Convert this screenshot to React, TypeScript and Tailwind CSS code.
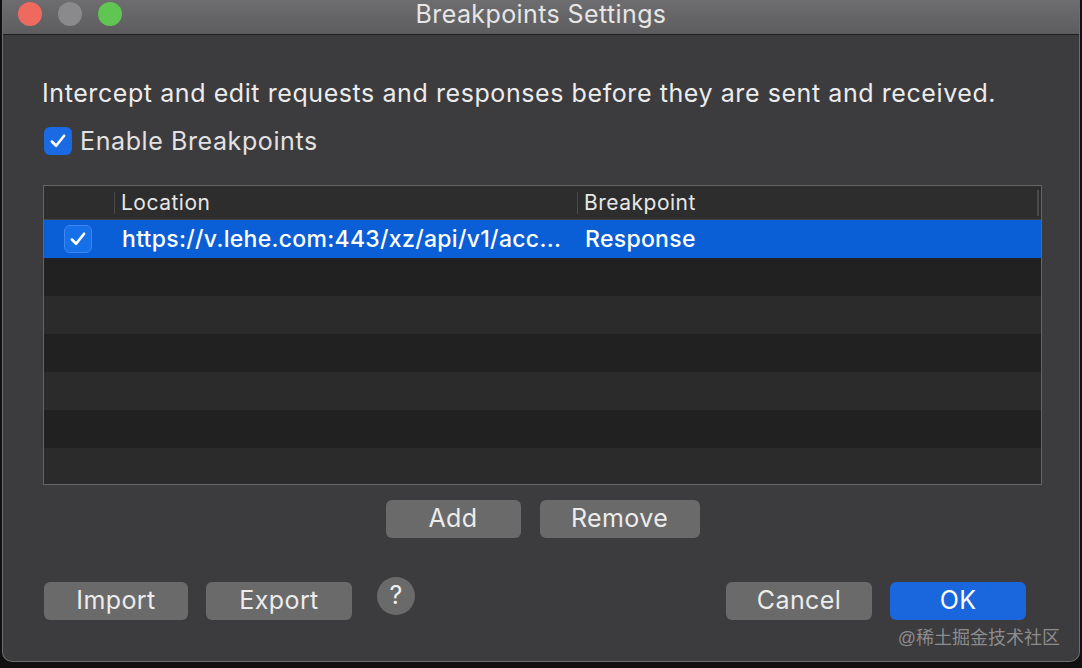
import React from "react";

const font = { fontFamily: "Inter, 'Liberation Sans', sans-serif" };

const Check = ({ size = 20 }: { size?: number }) => (
    <svg width={size} height={size} viewBox="0 0 18 18" fill="none">
        <path d="M3.5 9.5 L7.3 13.3 L14.5 4.3" stroke="white" strokeWidth="2.4" strokeLinecap="round" strokeLinejoin="round" />
    </svg>
);

const Button = ({ label, width, primary = false }: { label: string; width: string; primary?: boolean }) => (
    <div
        className={`${width} h-[38px] rounded-[6px] flex items-center justify-center text-[25px] tracking-[0.4px] text-[#ececec] ${
            primary ? "bg-[#1a66dc] text-white" : "bg-[#6a6a6b]"
        }`}
    >
        {label}
    </div>
);

export default function App() {
    const rows = [0, 1, 2, 3, 4, 5];

    return (
        <div className="min-h-screen w-full bg-[#101010]" style={font}>
            <div className="ml-[2px] w-[1078px] h-[662px] bg-[#3c3b3d] rounded-b-[10px] border-x border-b border-[#6d6d6d] flex flex-col overflow-hidden">
                {/* title bar */}
                <div className="relative h-[35px] shrink-0 bg-gradient-to-b from-[#6e6d6f] to-[#5d5c5e] border-b border-[#1e1e1e] flex items-center">
                    <div className="flex items-center gap-[16px] pl-[15px] -mt-[6px]">
                        <div className="w-[24px] h-[24px] rounded-full bg-[#ee6a5f]" />
                        <div className="w-[24px] h-[24px] rounded-full bg-[#8a898b]" />
                        <div className="w-[24px] h-[24px] rounded-full bg-[#61c554]" />
                    </div>
                    <div className="absolute inset-x-0 top-0 h-[30px] flex items-center justify-center text-[25px] tracking-[0.4px] text-[#e6e6e6]">
                        Breakpoints Settings
                    </div>
                </div>

                {/* body */}
                <div className="flex flex-col pl-[39px] pr-[36px] pt-[43px]">
                    <p className="text-[25px] leading-[30px] text-[#ececec] tracking-[0.58px]">
                        Intercept and edit requests and responses before they are sent and received.
                    </p>

                    <div className="flex items-center gap-[8px] mt-[19px] ml-[2px] h-[28px]">
                        <div className="w-[28px] h-[28px] rounded-[6px] bg-[#1a6ae4] flex items-center justify-center">
                            <Check />
                        </div>
                        <span className="text-[25px] leading-[28px] text-[#e2e2e2] tracking-[0.6px]">Enable Breakpoints</span>
                    </div>

                    {/* table */}
                    <div className="mt-[30px] ml-[1px] w-[999px] h-[300px] border border-[#656565] bg-[#2b2b2b] flex flex-col overflow-hidden">
                        <div className="h-[34px] shrink-0 bg-[#2d2d2d] border-b border-[#444] flex items-center text-[21px] text-[#e6e6e6] tracking-[0.5px]">
                            <div className="w-[71px] h-[22px] border-r border-[#4a4a4a]" />
                            <div className="w-[463px] h-[22px] flex items-center pl-[6px] border-r border-[#4a4a4a]">Location</div>
                            <div className="flex-1 pl-[6px]">Breakpoint</div>
                            <div className="w-[2px] h-[26px] bg-[#4a4a4a] mr-[2px]" />
                        </div>
                        <div className="h-[38px] shrink-0 bg-[#0a5ed6] flex items-center text-[23px] text-white font-medium tracking-[0.3px]">
                            <div className="w-[72px] flex justify-start pl-[20px]">
                                <div className="w-[28px] h-[28px] rounded-[6px] bg-[#1670e8] border border-[#3d86ee] flex items-center justify-center">
                                    <Check />
                                </div>
                            </div>
                            <div className="w-[462px] pl-[6px] whitespace-nowrap overflow-hidden">
                                https://v.lehe.com:443/xz/api/v1/acc...
                            </div>
                            <div className="pl-[7px]">Response</div>
                        </div>
                        {rows.map((i) => (
                            <div
                                key={i}
                                className={`h-[38px] shrink-0 ${i % 2 === 0 ? "bg-[#212121]" : "bg-[#2b2b2b]"}`}
                            />
                        ))}
                    </div>

                    <div className="flex justify-center gap-[19px] mt-[15px] ml-[1px] w-[999px]">
                        <Button label="Add" width="w-[135px]" />
                        <Button label="Remove" width="w-[160px]" />
                    </div>

                    <div className="flex items-start mt-[44px] ml-[2px] pr-[17px]">
                        <Button label="Import" width="w-[144px]" />
                        <div className="ml-[18px]">
                            <Button label="Export" width="w-[146px]" />
                        </div>
                        <div className="ml-[25px] -mt-[5px] w-[38px] h-[38px] rounded-full bg-[#6a6a6b] flex items-center justify-center text-[25px] text-[#f0f0f0]">
                            ?
                        </div>
                        <div className="ml-auto flex gap-[18px]">
                            <Button label="Cancel" width="w-[146px]" />
                            <Button label="OK" width="w-[136px]" primary />
                        </div>
                    </div>

                    <div className="flex justify-end mt-[5px] -mr-[17px]">
                        <span
                            className="text-[18px] text-[#8c8c8c]"
                            style={{ fontFamily: "'Liberation Sans', 'Noto Sans CJK SC', sans-serif" }}
                        >
                            @稀土掘金技术社区
                        </span>
                    </div>
                </div>
            </div>
        </div>
    );
}
